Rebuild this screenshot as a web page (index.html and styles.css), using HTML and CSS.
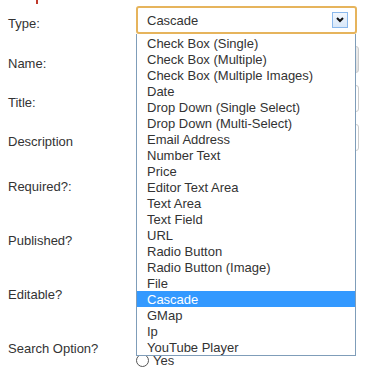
FILE: index.html
```html
<!DOCTYPE html>
<html lang="en">
<head>
    <meta charset="UTF-8">
    <title>Field Settings</title>
    <link rel="stylesheet" href="styles.css">
</head>
<body>

<div class="page">
    <div class="heading"><span class="mark"></span></div>

    <div class="form">
        <div class="row row-type">
            <label class="label">Type:</label>
            <div class="field">
                <div class="select">
                    <span class="select-text">Cascade</span>
                    <span class="select-arrow">
                        <svg width="8" height="6" viewBox="0 0 8 6"><path d="M1 1 L4 4 L7 1" fill="none" stroke="#111" stroke-width="2"/></svg>
                    </span>
                </div>
                <ul class="options">
                    <li>Check Box (Single)</li>
                    <li>Check Box (Multiple)</li>
                    <li>Check Box (Multiple Images)</li>
                    <li>Date</li>
                    <li>Drop Down (Single Select)</li>
                    <li>Drop Down (Multi-Select)</li>
                    <li>Email Address</li>
                    <li>Number Text</li>
                    <li>Price</li>
                    <li>Editor Text Area</li>
                    <li>Text Area</li>
                    <li>Text Field</li>
                    <li>URL</li>
                    <li>Radio Button</li>
                    <li>Radio Button (Image)</li>
                    <li>File</li>
                    <li class="selected">Cascade</li>
                    <li>GMap</li>
                    <li>Ip</li>
                    <li>YouTube Player</li>
                </ul>
            </div>
        </div>

        <div class="row row-name">
            <label class="label">Name:</label>
            <div class="field"><div class="input input-grey"></div></div>
        </div>

        <div class="row row-title">
            <label class="label">Title:</label>
            <div class="field"><div class="input"></div></div>
        </div>

        <div class="row row-desc">
            <label class="label">Description</label>
            <div class="field"><div class="input"></div></div>
        </div>

        <div class="row row-radio">
            <label class="label">Required?:</label>
            <div class="field"></div>
        </div>

        <div class="row row-radio">
            <label class="label">Published?</label>
            <div class="field"></div>
        </div>

        <div class="row row-radio">
            <label class="label">Editable?</label>
            <div class="field"></div>
        </div>

        <div class="row row-search">
            <label class="label">Search Option?</label>
            <div class="field">
                <div class="radio-line"><span class="radio"></span>Yes</div>
            </div>
        </div>
    </div>
</div>

</body>
</html>
```

FILE: styles.css
```css
body {
    font-family: "Liberation Sans", Arial, sans-serif;
    font-size: 13px;
    color: #333;
    background-color: #fff;
    margin: 0;
    padding: 0;
    overflow: hidden;
}
.page {
    width: 378px;
    height: 369px;
}
.heading {
    height: 6px;
    padding-left: 36px;
}
.mark {
    display: inline-block;
    width: 2px;
    height: 4px;
    background-color: #c0392b;
    vertical-align: top;
}
.row {
    display: flex;
}
.row-type {
    height: 40px;
}
.row-name,
.row-title {
    height: 39px;
}
.row-desc {
    height: 45px;
}
.row-radio {
    height: 54px;
}
.label {
    width: 128px;
    padding-left: 8px;
    padding-top: 10px;
    line-height: 15px;
}
.field {
    position: relative;
    flex: 1;
}
.select {
    width: 221px;
    height: 28px;
    box-sizing: border-box;
    border: 2px solid #e6b45c;
    border-radius: 3px;
    display: flex;
    align-items: center;
    padding-left: 9px;
    padding-right: 7px;
}
.select-text {
    flex: 1;
}
.select-arrow {
    width: 16px;
    height: 16px;
    box-sizing: border-box;
    border: 1px solid #8ab8ec;
    background: linear-gradient(#f2f7fd, #d9e8f9);
    display: flex;
    align-items: center;
    justify-content: center;
}
.options {
    position: absolute;
    top: 28px;
    left: 0;
    width: 220px;
    box-sizing: border-box;
    margin: 0;
    padding: 1px 0 0 0;
    list-style: none;
    background-color: #fff;
    border: 1px solid #7f9db9;
    border-top: none;
    z-index: 2;
}
.options li {
    height: 16px;
    line-height: 17px;
    padding-left: 10px;
    white-space: nowrap;
}
.options li.selected {
    background-color: #3399ff;
    color: #fff;
}
.input {
    width: 223px;
    height: 27px;
    box-sizing: border-box;
    border: 1px solid #ccc;
    border-radius: 3px;
    background-color: #fff;
}
.input-grey {
    background: linear-gradient(#ececec, #e0e0e0);
}
.row-search .field {
    padding-top: 21px;
}
.radio-line {
    display: flex;
    align-items: center;
    height: 17px;
    line-height: 17px;
}
.radio {
    width: 11px;
    height: 11px;
    border: 1px solid #555;
    border-radius: 50%;
    margin-right: 4px;
    background-color: #fff;
}
```
